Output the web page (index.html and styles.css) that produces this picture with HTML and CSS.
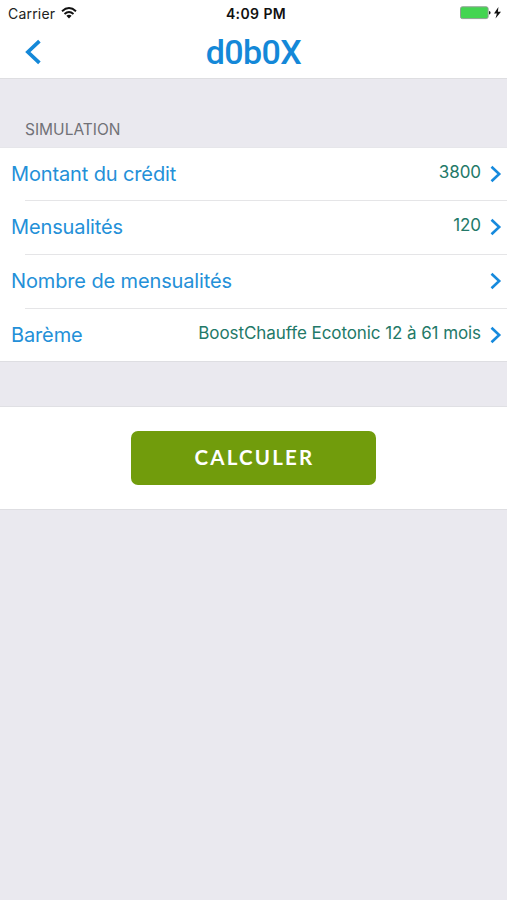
FILE: index.html
```html
<!DOCTYPE html>
<html lang="fr">
<head>
<meta charset="utf-8">
<title>Simulation</title>
<link rel="stylesheet" href="styles.css">
</head>
<body>
<header class="header">
  <div class="status">
    <div class="carrier"><span class="carrier-name">Carrier</span>
      <svg class="wifi" width="16" height="12" viewBox="0 0 16 12" fill="none" stroke="#111" stroke-width="1.9"><path d="M1 4.2Q8-2 15 4.2M3.5 7Q8 3 12.5 7"/><path d="M5.4 8.8Q8 6.8 10.6 8.8L8 11.6Z" fill="#111" stroke="none"/></svg>
    </div>
    <span class="time">4:09 PM</span>
    <div class="power">
      <svg width="42" height="14" viewBox="0 0 42 14"><rect x=".5" y=".8" width="27.6" height="11.8" rx="1.8" fill="#43d551" stroke="#8fa093"/><path d="M29 5Q30.6 5 30.6 6.7T29 8.4Z" fill="#222"/><path d="M38.4 1L34 7.6H36.9L35.5 12.6L41 5.7H37.9Z" fill="#111"/></svg>
    </div>
  </div>
  <div class="nav">
    <svg class="back" width="18" height="26" viewBox="0 0 18 26" fill="none" stroke="#1488d8" stroke-width="3.7"><path d="M15.4 2.2L3.9 13L15.4 23.8"/></svg>
    <span class="logo">d0b0X</span>
  </div>
</header>
<main>
  <h1 class="heading">SIMULATION</h1>
  <section class="list">
    <div class="row"><span class="label">Montant du crédit</span><span class="value">3800</span><svg class="chevron" width="12" height="18" viewBox="0 0 12 18"><path d="M1.5 1.7L9.2 9L1.5 16.3"/></svg></div>
    <div class="row"><span class="label">Mensualités</span><span class="value">120</span><svg class="chevron" width="12" height="18" viewBox="0 0 12 18"><path d="M1.5 1.7L9.2 9L1.5 16.3"/></svg></div>
    <div class="row"><span class="label">Nombre de mensualités</span><span class="value"></span><svg class="chevron" width="12" height="18" viewBox="0 0 12 18"><path d="M1.5 1.7L9.2 9L1.5 16.3"/></svg></div>
    <div class="row"><span class="label">Barème</span><span class="value">BoostChauffe Ecotonic 12 à 61 mois</span><svg class="chevron" width="12" height="18" viewBox="0 0 12 18"><path d="M1.5 1.7L9.2 9L1.5 16.3"/></svg></div>
  </section>
  <section class="action"><button class="submit">CALCULER</button></section>
</main>
</body>
</html>
```

FILE: styles.css
```css
* { box-sizing: border-box; }
body { margin: 0; min-height: 900px; background: #eae9ef; font-family: Inter, sans-serif; }
.header { height: 79px; background: #fff; border-bottom: 1px solid #dedee1; }
.status { height: 26px; padding: 0 5px 0 8px; display: grid; grid-template-columns: 1fr auto 1fr; align-items: center; font-size: 14px; color: #222; }
.carrier { display: flex; align-items: center; gap: 6px; }
.carrier-name { letter-spacing: .2px; }
.wifi { margin-top: -1px; }
.time { font-weight: 600; color: #111; letter-spacing: .4px; margin-left: 2px; }
.power { display: flex; justify-content: flex-end; }
.nav { height: 52px; display: grid; grid-template-columns: 1fr auto 1fr; align-items: center; padding: 0 24px; }
.logo { font: 500 34px/40px Roboto, sans-serif; letter-spacing: -.6px; color: #1488d8; }
.heading { margin: 0; height: 68px; padding: 41px 0 0 25px; font-size: 15.5px; line-height: 19px; font-weight: 400; color: #717177; }
.list { background: #fff; border-top: 1px solid #e6e6ea; border-bottom: 1px solid #dedee2; display: grid; grid-template-rows: 53px 54px 54px 52px; }
.row { display: flex; align-items: center; padding: 0 5px 2px 11px; background: linear-gradient(#e5e5e7, #e5e5e7) 25px 100% / 100% 1px no-repeat; }
.row:last-child { background: none; padding-bottom: 0; }
.label { flex: 1; font-size: 20px; letter-spacing: -.13px; color: #2490d8; white-space: nowrap; }
.value { font-size: 17px; letter-spacing: -.08px; color: #237968; white-space: nowrap; margin: -4px 9px 0 0; }
.chevron { fill: none; stroke: #168add; stroke-width: 2.6; }
.action { margin-top: 44px; height: 104px; background: #fff; border-top: 1px solid #e0e0e4; border-bottom: 1px solid #dedee2; display: flex; justify-content: center; align-items: center; }
.submit { width: 245px; height: 54px; border: 0; border-radius: 7px; background: #719c0c; color: #fff; font: 700 20.5px Lato, sans-serif; letter-spacing: 2.2px; padding: 0 0 2px 2px; margin-top: -1px; }
```
